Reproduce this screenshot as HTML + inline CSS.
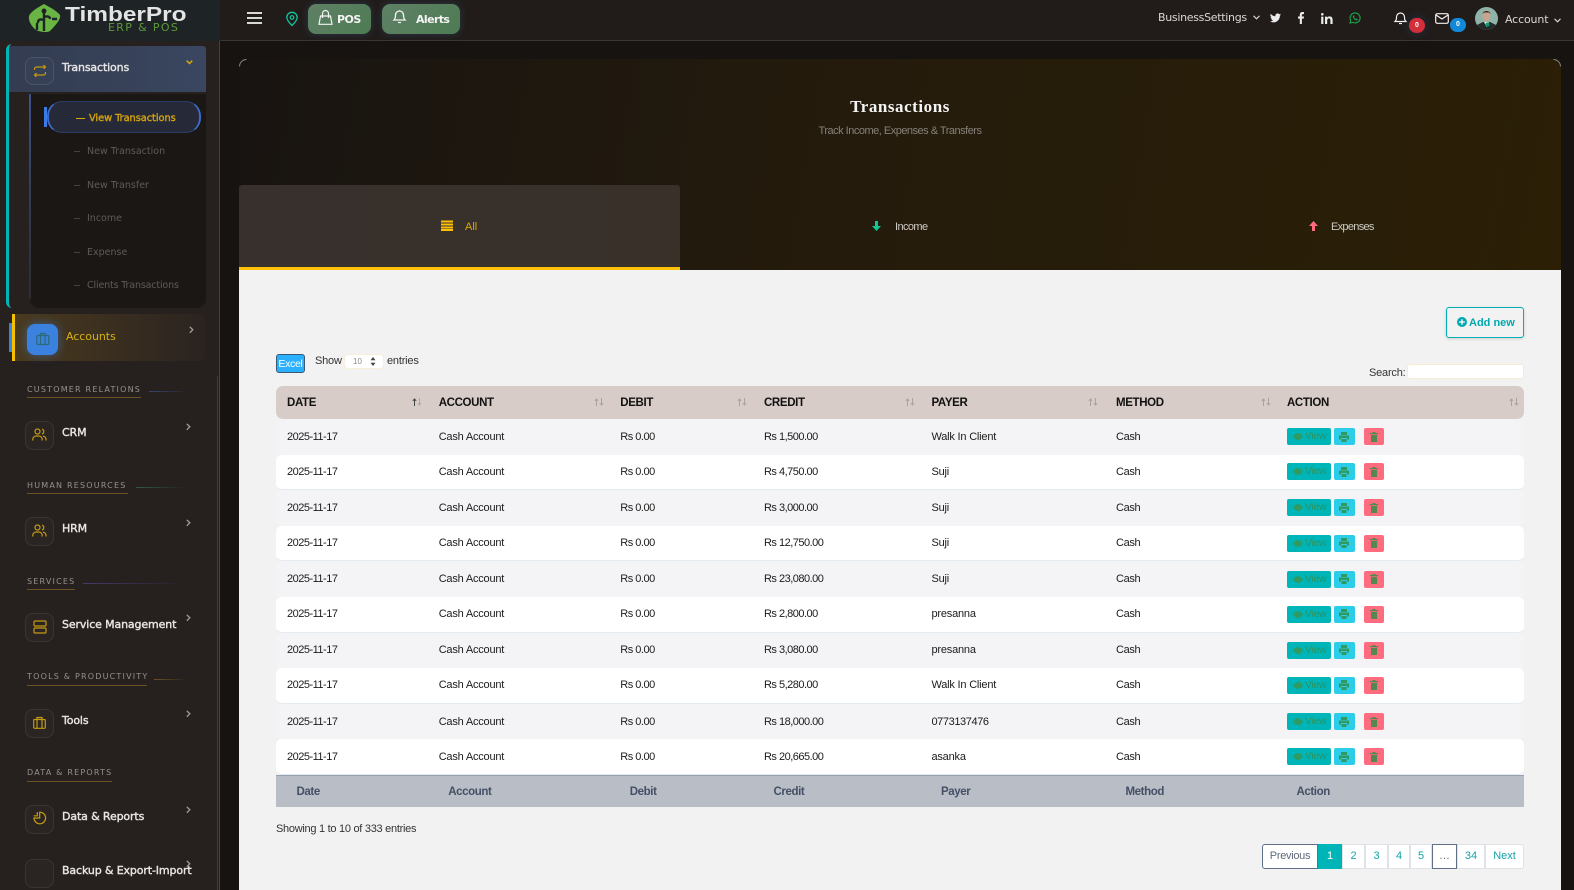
<!DOCTYPE html>
<html><head><meta charset="utf-8"><title>Transactions</title>
<style>
*{box-sizing:border-box}
html,body{margin:0;padding:0;width:1574px;height:890px;overflow:hidden;background:#171310;font-family:"Liberation Sans",sans-serif}
.a{position:absolute;white-space:nowrap}
svg{display:block;overflow:visible}
.m{font-family:"DejaVu Sans",sans-serif}
.it{font-family:"DejaVu Sans",sans-serif;font-size:11px;color:#e8e6e4;letter-spacing:-.13px;-webkit-text-stroke:.4px #e8e6e4;line-height:14px}
.sub{font-family:"DejaVu Sans",sans-serif;font-size:9.5px;color:#5f5b57;line-height:12px;letter-spacing:0}
.dash{background:#45413d;height:1px;width:6px}
.sec{font-family:"DejaVu Sans",sans-serif;font-size:8px;letter-spacing:1.2px;color:#95918d;line-height:10px}
.ul{height:1px;background:#6a5225;left:27px}
.ibox{left:25px;width:29px;height:29px;border:1px solid #3a3532;border-radius:8px;background:#2a2523}
.chev{left:186px}
table{position:absolute;left:276px;top:386px;width:1248px;border-collapse:separate;border-spacing:0;table-layout:fixed;font-size:11px;color:#1b1b1b}
th{height:33px;background:#d7ccc8;text-align:left;padding:0 0 0 11px;font-size:11.5px;letter-spacing:-.35px;color:#111;position:relative}
th:first-child{border-radius:7px 0 0 7px}th:last-child{border-radius:0 7px 7px 0}
th svg{position:absolute;top:12px}
td{height:35.6px;padding:0 0 0 11px;letter-spacing:-.2px}
tbody td:nth-child(1),tbody td:nth-child(3),tbody td:nth-child(4){letter-spacing:-.5px}
tbody td:nth-child(6){letter-spacing:-.35px}
tbody tr:nth-child(9) td:nth-child(5){letter-spacing:-.4px}
tbody tr:nth-child(odd) td{background:#f4f4f6}
tbody tr:nth-child(even) td{background:#fff;border-bottom:1px solid #e3ebf1}
tbody td:first-child{border-radius:6px 0 0 6px}tbody td:last-child{border-radius:0 6px 6px 0}
tfoot td{height:32px;background:#b8bdc6;border-top:1px solid #95a0b0;color:#455066;font-weight:bold;padding:2px 0 0 20.5px;font-size:11.5px;letter-spacing:-.4px}
.b{display:inline-block;height:17px;border-radius:2px;vertical-align:middle;position:relative}
tbody td .v{width:44px;background:#00b5b8;color:#2a9460;font-size:10.5px;line-height:16px;padding-left:18px;letter-spacing:-.3px}
.p{width:21px;background:#2ccde8;margin-left:3px}
.d{width:20px;background:#ff6b7f;margin-left:9px}
.v svg{position:absolute;left:6px;top:5px}
.p svg{position:absolute;left:5.5px;top:3.5px}.d svg{position:absolute;left:6px;top:3.5px}
.pg{position:absolute;top:844px;height:25px;background:#fff;border:1px solid #dfe2e6;font-size:11px;line-height:23px;text-align:center;color:#12a3a8}
</style></head><body>

<!-- top header -->
<div class="a" style="left:0;top:0;width:1574px;height:41px;background:#211c1a;border-bottom:1px solid #3a3633"></div>
<div class="a" style="left:0;top:0;width:220px;height:41px;background:#1e2326"></div>

<svg class="a" style="left:28px;top:4px" width="33" height="28" viewBox="0 0 33 28"><path d="M16 0C21 3 28 6 32 11C33 15 28 21 22 27C19 29 12 28 8 26C4 23 0 17 1 12C3 7 11 3 16 0Z" fill="#68b544"/><path d="M16 6V27M10 19C10 15 12 15 16 16M22 15C22 12 19 12 16 13M9 19V26M24 15H29" stroke="#1e2326" stroke-width="2.4" fill="none"/><circle cx="16" cy="7" r="2.5" fill="#1e2326"/></svg>
<div class="a" style="left:65px;top:4px;font-size:20px;font-weight:bold;color:#e4e4e4;line-height:23px;transform-origin:0 0;transform:scaleX(1.22)">TimberPro</div>
<div class="a m" style="left:108px;top:21px;font-size:11px;color:#5d9a3a;line-height:13px;letter-spacing:1.35px">ERP &amp; POS</div>

<svg class="a" style="left:247px;top:12px" width="16" height="12"><path d="M0 1H15M0 6H15M0 11H15" stroke="#f2f2f2" stroke-width="1.8"/></svg>
<svg class="a" style="left:286px;top:12px" width="12" height="14" viewBox="0 0 12 14"><path d="M6 13.5C3 10.5 .8 8 .8 5.5A5.2 5.2 0 0 1 11.2 5.5C11.2 8 9 10.5 6 13.5Z" fill="none" stroke="#10c7a0" stroke-width="1.3"/><circle cx="6" cy="5.5" r="1.8" fill="none" stroke="#10c7a0" stroke-width="1.2"/></svg>

<div class="a" style="left:308px;top:4px;width:63px;height:30px;border-radius:8px;background:linear-gradient(135deg,#5f8067,#4d7c52);box-shadow:0 0 8px rgba(70,110,160,.35)"></div>
<svg class="a" style="left:318px;top:10px" width="15" height="15" viewBox="0 0 15 15"><path d="M2.500 6H12.500L14 14.300H1ZM4.500 8V3.500A3 3 0 0 1 10.500 3.500V8" fill="none" stroke="#f4f4f4" stroke-width="1.2"/></svg>
<div class="a m" style="left:337px;top:13px;font-size:11px;font-weight:bold;color:#f4f4f4;line-height:14px;letter-spacing:-.5px">POS</div>
<div class="a" style="left:382px;top:4px;width:78px;height:30px;border-radius:8px;background:linear-gradient(135deg,#5f8067,#4d7c52);box-shadow:0 0 8px rgba(70,110,160,.35)"></div>
<svg class="a" style="left:393px;top:10px" width="13" height="14" viewBox="0 0 13 14"><path d="M1 10H12C10.500 8.500 10.500 7 10.500 5A4 4 0 0 0 2.500 5C2.500 7 2.500 8.500 1 10ZM5 12.500H8M6.500 .2V1" fill="none" stroke="#f4f4f4" stroke-width="1.3"/></svg>
<div class="a m" style="left:416px;top:13px;font-size:11px;font-weight:bold;color:#f4f4f4;line-height:14px;letter-spacing:-.6px">Alerts</div>

<div class="a m" style="left:1158px;top:11px;font-size:11px;color:#d9d7d5;line-height:14px;letter-spacing:-.3px">BusinessSettings</div>
<svg class="a" style="left:1253px;top:15px" width="7" height="5"><path d="M.5 .8L3.500 3.800L6.500 .8" fill="none" stroke="#d9d7d5" stroke-width="1.1"/></svg>
<svg class="a" style="left:1270px;top:13px" width="11" height="10" viewBox="0 0 24 20"><path d="M24 2.400c-.9.400-1.800.7-2.800.8 1-.6 1.800-1.600 2.200-2.700-1 .6-2 1-3.100 1.200A4.900 4.900 0 0 0 11.900 6.200 14 14 0 0 1 1.700.9a4.900 4.900 0 0 0 1.500 6.600c-.8 0-1.600-.2-2.200-.6 0 2.400 1.700 4.400 3.900 4.900-.7.200-1.500.2-2.200.1.600 2 2.400 3.400 4.600 3.400A9.900 9.900 0 0 1 0 17.300 14 14 0 0 0 21.500 4.900c1-.7 1.800-1.500 2.500-2.500z" fill="#ececec"/></svg>
<svg class="a" style="left:1298px;top:12px" width="6" height="12" viewBox="0 0 10 20"><path d="M6.500 20V11H9.500L10 7.500H6.500V5.200C6.500 4.200 6.800 3.500 8.200 3.500H10V.3C9.700.2 8.600 0 7.400 0 4.800 0 3 1.600 3 4.600V7.500H0V11H3V20Z" fill="#ececec"/></svg>
<svg class="a" style="left:1321px;top:13px" width="12" height="11" viewBox="0 0 12 11"><path d="M.2 3.600H2.400V11H.2ZM1.300 0A1.300 1.300 0 1 1 1.300 2.600 1.300 1.300 0 0 1 1.300 0ZM4 3.600H6.100V4.600C6.500 3.900 7.300 3.400 8.400 3.400 10.700 3.400 11.600 4.800 11.600 7V11H9.400V7.500C9.400 6.400 9.100 5.400 8 5.400 6.800 5.400 6.200 6.200 6.200 7.500V11H4Z" fill="#ececec"/></svg>
<svg class="a" style="left:1349px;top:12px" width="12" height="12" viewBox="0 0 12 12"><path d="M1 11L1.700 8.300A5 5 0 1 1 3.700 10.300Z" fill="none" stroke="#18a84a" stroke-width="1.100"/><path d="M4.200 3.500C3.500 4.500 4 6 5.200 7.200 6.400 8.300 7.800 8.700 8.500 8L8.500 7 7.300 6.400 6.800 7C6 6.600 5.400 6 5 5.200L5.500 4.600 4.900 3.400Z" fill="#18a84a"/></svg>

<svg class="a" style="left:1394px;top:12px" width="13" height="13" viewBox="0 0 13 13"><path d="M1 9.500H12C10.500 8 10.500 7 10.500 5A4 4 0 0 0 2.500 5C2.500 7 2.500 8 1 9.500ZM5 11.500H8" fill="none" stroke="#f0f0f0" stroke-width="1.200"/></svg>
<div class="a" style="left:1409px;top:18px;width:16px;height:15px;border-radius:8px;background:#d32f3a;box-shadow:0 0 10px rgba(60,90,160,.35);color:#fff;font-size:7px;font-weight:bold;text-align:center;line-height:15px">0</div>
<svg class="a" style="left:1435px;top:13px" width="14" height="11" viewBox="0 0 14 11"><rect x=".7" y=".7" width="12.600" height="9.600" rx="1.500" fill="none" stroke="#f0f0f0" stroke-width="1.200"/><path d="M1 2L7 6L13 2" fill="none" stroke="#f0f0f0" stroke-width="1.200"/></svg>
<div class="a" style="left:1450px;top:18px;width:16px;height:14px;border-radius:8px;background:#1289d8;color:#fff;font-size:7px;font-weight:bold;text-align:center;line-height:14px">0</div>
<svg class="a" style="left:1475px;top:7px" width="23" height="23" viewBox="0 0 23 23"><defs><clipPath id="c"><circle cx="11.500" cy="11.500" r="11.500"/></clipPath></defs><g clip-path="url(#c)"><rect width="23" height="23" fill="#8fb3a8"/><path d="M0 23V19L8 15H15L23 19V23Z" fill="#232b2b"/><path d="M9 15L11.500 20L14 15Z" fill="#e5e5e5"/><ellipse cx="11.500" cy="9" rx="4" ry="5.500" fill="#c9a58d"/><path d="M7.500 7C8 3 15 3 15.500 7L14 5.500H9Z" fill="#3b2c25"/><circle cx="12.500" cy="17.500" r="2" fill="#0c9a70"/></g></svg>
<div class="a m" style="left:1505px;top:13px;font-size:11px;color:#d9d7d5;line-height:14px;letter-spacing:-.15px">Account</div>
<svg class="a" style="left:1554px;top:18px" width="7" height="5"><path d="M.5 .8L3.500 3.800L6.500 .8" fill="none" stroke="#d9d7d5" stroke-width="1.100"/></svg>

<!-- sidebar -->
<div class="a" style="left:0;top:41px;width:220px;height:849px;background:#26201e;border-right:1px solid #4a4038"></div>
<div class="a" style="left:217px;top:376px;width:1px;height:514px;background:#3f3833"></div>

<div class="a" style="left:6px;top:44px;width:12px;height:264px;border-left:3px solid #00b5b8;border-radius:6px 0 0 6px"></div>
<div class="a" style="left:9px;top:46px;width:197px;height:46px;background:linear-gradient(90deg,#333c50,#3a4660);border-radius:3px 3px 0 0"></div>
<div class="a" style="left:25px;top:57px;width:29px;height:28px;border:1px solid #4b5468;border-radius:8px;background:#364056"></div>
<svg class="a" style="left:33px;top:64px" width="14" height="14" viewBox="0 0 14 14"><path d="M1.500 6V5A2 2 0 0 1 3.500 3H12.500M10.500 1L12.500 3L10.500 5M12.500 8V9A2 2 0 0 1 10.500 11H1.500M3.500 9L1.500 11L3.500 13" fill="none" stroke="#c49a12" stroke-width="1.200"/></svg>
<div class="a it" style="left:62px;top:61px">Transactions</div>
<svg class="a" style="left:186px;top:60px" width="7" height="5"><path d="M.7 .7L3.500 3.500L6.300 .7" fill="none" stroke="#d8a80c" stroke-width="1.500"/></svg>

<div class="a" style="left:30px;top:94px;width:176px;height:214px;background:#1b1715;border-radius:0 0 9px 9px"></div>
<div class="a" style="left:29px;top:94px;width:2px;height:205px;background:linear-gradient(180deg,#3d5390,#33405f 40%,#2d2c30)"></div>
<div class="a" style="left:47px;top:101px;width:154px;height:32px;background:#262938;border-style:solid;border-width:1px 2px 1px 2px;border-color:#2a3c66 #3c6ccf #2a3c66 #3c6ccf;border-radius:15px"></div>
<div class="a" style="left:44px;top:107px;width:3px;height:20px;background:#3b7be8"></div>
<div class="a" style="left:76px;top:117.500px;width:9px;height:1.500px;background:#d8a80c"></div>
<div class="a" style="left:89px;top:112px;font-family:'DejaVu Sans',sans-serif;font-size:9.800px;letter-spacing:-.05px;color:#d0a10d;-webkit-text-stroke:.4px #d0a10d;line-height:13px">View Transactions</div>

<div class="a dash" style="left:74px;top:151px"></div><div class="a sub" style="left:87px;top:146px">New Transaction</div>
<div class="a dash" style="left:74px;top:185px"></div><div class="a sub" style="left:87px;top:180px">New Transfer</div>
<div class="a dash" style="left:74px;top:218px"></div><div class="a sub" style="left:87px;top:213px">Income</div>
<div class="a dash" style="left:74px;top:252px"></div><div class="a sub" style="left:87px;top:247px">Expense</div>
<div class="a dash" style="left:74px;top:285px"></div><div class="a sub" style="left:87px;top:280px;letter-spacing:-.15px">Clients Transactions</div>

<div class="a" style="left:9px;top:323px;width:3px;height:29px;background:#3b82e0"></div>
<div class="a" style="left:12px;top:314px;width:193px;height:47px;background:linear-gradient(90deg,#4a3a1e,#2a2320);border-left:3px solid #f5c000;border-radius:0 5px 5px 0"></div>
<div class="a" style="left:27px;top:324px;width:31px;height:31px;border-radius:8px;background:#3b82e0;box-shadow:0 0 10px rgba(59,130,224,.55)"></div>
<svg class="a" style="left:36px;top:332px" width="14" height="14" viewBox="0 0 14 14"><rect x=".8" y="3.500" width="12" height="9" rx="1" fill="none" stroke="#2b6a78" stroke-width="1.200"/><path d="M4.500 3.500V1.500H9V3.500M4.500 3.500V12.500M9 3.500V12.500" fill="none" stroke="#2b6a78" stroke-width="1.200"/></svg>
<div class="a m" style="left:66px;top:330px;font-size:11px;color:#d8b212;letter-spacing:-.05px;line-height:14px">Accounts</div>
<svg class="a" style="left:189px;top:326px" width="5" height="8"><path d="M.8 .8L3.800 3.800L.8 6.800" fill="none" stroke="#a29e9a" stroke-width="1.300"/></svg>

<div class="a sec" style="left:27px;top:385px">CUSTOMER RELATIONS</div><div class="a ul" style="top:397px;width:114px"></div>
<div class="a" style="left:149px;top:391px;width:40px;height:1px;background:linear-gradient(90deg,#33466e,transparent)"></div>
<div class="a ibox" style="top:421px"></div>
<svg class="a" style="left:32px;top:428px" width="15" height="14" viewBox="0 0 15 14"><circle cx="5.500" cy="3.500" r="2.500" fill="none" stroke="#c49a12" stroke-width="1.200"/><path d="M.8 12.500V11A3.500 3.500 0 0 1 4.300 8H6.700A3.500 3.500 0 0 1 10.200 11V12.500M10 1.200A2.500 2.500 0 0 1 10 6M11 8.200A3.300 3.300 0 0 1 14 11V12.500" fill="none" stroke="#c49a12" stroke-width="1.200"/></svg>
<div class="a it" style="left:62px;top:426px">CRM</div>
<svg class="a chev" style="top:423px" width="5" height="8"><path d="M.8 .8L3.800 3.800L.8 6.800" fill="none" stroke="#a29e9a" stroke-width="1.300"/></svg>

<div class="a sec" style="left:27px;top:481px">HUMAN RESOURCES</div><div class="a ul" style="top:493px;width:101px"></div>
<div class="a" style="left:136px;top:487px;width:50px;height:1px;background:linear-gradient(90deg,#2c5a4a,transparent)"></div>
<div class="a ibox" style="top:517px"></div>
<svg class="a" style="left:32px;top:524px" width="15" height="14" viewBox="0 0 15 14"><circle cx="5.500" cy="3.500" r="2.500" fill="none" stroke="#c49a12" stroke-width="1.200"/><path d="M.8 12.500V11A3.500 3.500 0 0 1 4.300 8H6.700A3.500 3.500 0 0 1 10.200 11V12.500M10 1.200A2.500 2.500 0 0 1 10 6M11 8.200A3.300 3.300 0 0 1 14 11V12.500" fill="none" stroke="#c49a12" stroke-width="1.200"/></svg>
<div class="a it" style="left:62px;top:522px">HRM</div>
<svg class="a chev" style="top:519px" width="5" height="8"><path d="M.8 .8L3.800 3.800L.8 6.800" fill="none" stroke="#a29e9a" stroke-width="1.300"/></svg>

<div class="a sec" style="left:27px;top:577px">SERVICES</div><div class="a ul" style="top:589px;width:48px"></div>
<div class="a" style="left:83px;top:583px;width:103px;height:1px;background:linear-gradient(90deg,#463a6e,transparent)"></div>
<div class="a ibox" style="top:613px"></div>
<svg class="a" style="left:33px;top:620px" width="14" height="14" viewBox="0 0 14 14"><rect x="1" y="1" width="12" height="5" rx="1" fill="none" stroke="#c49a12" stroke-width="1.200"/><rect x="1" y="8" width="12" height="5" rx="1" fill="none" stroke="#c49a12" stroke-width="1.200"/></svg>
<div class="a it" style="left:62px;top:618px">Service Management</div>
<svg class="a chev" style="top:614px" width="5" height="8"><path d="M.8 .8L3.800 3.800L.8 6.800" fill="none" stroke="#a29e9a" stroke-width="1.300"/></svg>

<div class="a sec" style="left:27px;top:672px">TOOLS &amp; PRODUCTIVITY</div><div class="a ul" style="top:685px;width:120px"></div>
<div class="a" style="left:154px;top:679px;width:34px;height:1px;background:linear-gradient(90deg,#6a5225,transparent)"></div>
<div class="a ibox" style="top:709px"></div>
<svg class="a" style="left:33px;top:716px" width="13" height="14" viewBox="0 0 13 14"><rect x=".7" y="3.500" width="11.600" height="8.800" rx="1" fill="none" stroke="#c49a12" stroke-width="1.200"/><path d="M4 3.500V1.500H9V3.500M4 3.500V12.300M9 3.500V12.300" fill="none" stroke="#c49a12" stroke-width="1.200"/></svg>
<div class="a it" style="left:62px;top:714px">Tools</div>
<svg class="a chev" style="top:710px" width="5" height="8"><path d="M.8 .8L3.800 3.800L.8 6.800" fill="none" stroke="#a29e9a" stroke-width="1.300"/></svg>

<div class="a sec" style="left:27px;top:768px">DATA &amp; REPORTS</div><div class="a ul" style="top:781px;width:85px"></div>
<div class="a ibox" style="top:805px"></div>
<svg class="a" style="left:33px;top:811px" width="14" height="14" viewBox="0 0 14 14"><path d="M6.700 1.200A5.800 5.800 0 1 1 1 7H6.700ZM4.300 1V4.800H.8" fill="none" stroke="#c49a12" stroke-width="1.200"/></svg>
<div class="a it" style="left:62px;top:810px">Data &amp; Reports</div>
<svg class="a chev" style="top:806px" width="5" height="8"><path d="M.8 .8L3.800 3.800L.8 6.800" fill="none" stroke="#a29e9a" stroke-width="1.300"/></svg>
<div class="a ibox" style="top:859px"></div>
<div class="a it" style="left:62px;top:864px">Backup &amp; Export-Import</div>
<svg class="a chev" style="top:860px" width="5" height="8"><path d="M.8 .8L3.800 3.800L.8 6.800" fill="none" stroke="#a29e9a" stroke-width="1.300"/></svg>

<!-- page hero -->
<div class="a" style="left:239px;top:59px;width:1322px;height:212px;border-radius:10px 10px 0 0;background:linear-gradient(100deg,#181411 0%,#241b0c 45%,#2b1f06 100%)"></div>
<svg class="a" style="left:239px;top:59px" width="8" height="8"><path d="M.5 7.500A7 7 0 0 1 7.500 .5" fill="none" stroke="#8a8680" stroke-width="1"/></svg>
<svg class="a" style="left:1553px;top:59px" width="8" height="8"><path d="M.5 .5A7 7 0 0 1 7.500 7.500" fill="none" stroke="#8a8680" stroke-width="1"/></svg>
<div class="a" style="left:739px;top:97px;width:322px;text-align:center;font-family:'Liberation Serif',serif;font-weight:bold;font-size:17px;letter-spacing:.55px;color:#f4f4f4;line-height:20px">Transactions</div>
<div class="a" style="left:739px;top:124px;width:322px;text-align:center;font-size:11px;letter-spacing:-.5px;color:#85817a;line-height:14px">Track Income, Expenses &amp; Transfers</div>

<div class="a" style="left:239px;top:185px;width:441px;height:85px;background:linear-gradient(90deg,#37302c,#39302a);border-radius:3px 3px 0 0;border-bottom:3px solid #ffc107"></div>
<svg class="a" style="left:441px;top:221px" width="12" height="10" viewBox="0 0 12 10"><path d="M0 .5H12M0 3.500H12M0 6.500H12M0 9H12" stroke="#ffc107" stroke-width="2"/></svg>
<div class="a" style="left:465px;top:221px;font-size:11px;color:#dba70b;line-height:13px">All</div>
<svg class="a" style="left:872px;top:221px" width="9" height="10" viewBox="0 0 9 10"><path d="M3 0H6V5H9L4.500 10L0 5H3Z" fill="#12c793"/></svg>
<div class="a" style="left:895px;top:221px;font-size:11px;color:#cfccc6;letter-spacing:-.6px;line-height:13px">Income</div>
<svg class="a" style="left:1309px;top:221px" width="9" height="10" viewBox="0 0 9 10"><path d="M3 10H6V5H9L4.500 0L0 5H3Z" fill="#ff6b7f"/></svg>
<div class="a" style="left:1331px;top:221px;font-size:11px;color:#cfccc6;letter-spacing:-.7px;line-height:13px">Expenses</div>

<!-- content -->
<div class="a" style="left:239px;top:270px;width:1322px;height:620px;background:#f2f2f2"></div>

<div class="a" style="left:1446px;top:307px;width:78px;height:31px;border:1.500px solid #00b0b6;border-radius:3px;box-shadow:0 1px 3px rgba(0,0,0,.15)"></div>
<svg class="a" style="left:1457px;top:317px" width="10" height="10" viewBox="0 0 10 10"><circle cx="5" cy="5" r="5" fill="#00a8b0"/><path d="M5 2.200V7.800M2.200 5H7.800" stroke="#f2f2f2" stroke-width="1.500"/></svg>
<div class="a" style="left:1469px;top:317px;font-size:11px;font-weight:bold;color:#00a8b0;line-height:13px">Add new</div>

<div class="a" style="left:276px;top:354px;width:29px;height:19px;background:#2bb0ff;border:1px solid #3a5a78;border-radius:3px;color:#fff;font-size:10.500px;letter-spacing:-.3px;text-align:center;line-height:18px">Excel</div>
<div class="a" style="left:315px;top:355px;font-size:11px;color:#333;line-height:13px;letter-spacing:-.2px">Show</div>
<div class="a" style="left:344px;top:354px;width:40px;height:15px;background:#fff;border:1px solid #f7efd8;border-radius:4px;color:#8a8a8a;font-size:8px;line-height:13px;padding-left:8px">10</div>
<svg class="a" style="left:370px;top:357px" width="6" height="9"><path d="M3 0L5.500 3.300H.5ZM3 9L5.500 5.700H.5Z" fill="#444"/></svg>
<div class="a" style="left:387px;top:355px;font-size:11px;color:#333;line-height:13px;letter-spacing:-.2px">entries</div>
<div class="a" style="left:1369px;top:367px;font-size:11px;color:#333;line-height:13px;letter-spacing:-.2px">Search:</div>
<div class="a" style="left:1407px;top:364px;width:117px;height:15px;background:#fff;border:1px solid #f5ecd6;border-radius:3px"></div>

<table>
<colgroup><col style="width:151.700px"><col style="width:181.600px"><col style="width:143.700px"><col style="width:167.500px"><col style="width:184.500px"><col style="width:171px"><col></colgroup>
<thead><tr>
<th>DATE<svg style="left:136px" width="10" height="9"><path d="M2.500 8V1M.8 2.800L2.500 1L4.200 2.800" fill="none" stroke="#444" stroke-width="1"/><path d="M7.500 0V7M5.800 5.200L7.500 7L9.200 5.200" fill="none" stroke="#aaa" stroke-width="1"/></svg></th>
<th>ACCOUNT<svg style="left:166px" width="10" height="9"><path d="M2.500 8V1M.8 2.800L2.500 1L4.200 2.800M7.500 0V7M5.800 5.200L7.500 7L9.200 5.200" fill="none" stroke="#a9a3a0" stroke-width="1"/></svg></th>
<th>DEBIT<svg style="left:128px" width="10" height="9"><path d="M2.500 8V1M.8 2.800L2.500 1L4.200 2.800M7.500 0V7M5.800 5.200L7.500 7L9.200 5.200" fill="none" stroke="#a9a3a0" stroke-width="1"/></svg></th>
<th>CREDIT<svg style="left:152px" width="10" height="9"><path d="M2.500 8V1M.8 2.800L2.500 1L4.200 2.800M7.500 0V7M5.800 5.200L7.500 7L9.200 5.200" fill="none" stroke="#a9a3a0" stroke-width="1"/></svg></th>
<th>PAYER<svg style="left:168px" width="10" height="9"><path d="M2.500 8V1M.8 2.800L2.500 1L4.200 2.800M7.500 0V7M5.800 5.200L7.500 7L9.200 5.200" fill="none" stroke="#a9a3a0" stroke-width="1"/></svg></th>
<th>METHOD<svg style="left:156px" width="10" height="9"><path d="M2.500 8V1M.8 2.800L2.500 1L4.200 2.800M7.500 0V7M5.800 5.200L7.500 7L9.200 5.200" fill="none" stroke="#a9a3a0" stroke-width="1"/></svg></th>
<th>ACTION<svg style="left:233px" width="10" height="9"><path d="M2.500 8V1M.8 2.800L2.500 1L4.200 2.800M7.500 0V7M5.800 5.200L7.500 7L9.200 5.200" fill="none" stroke="#a9a3a0" stroke-width="1"/></svg></th>
</tr></thead>
<tbody>
<tr><td>2025-11-17</td><td>Cash Account</td><td>Rs 0.00</td><td>Rs 1,500.00</td><td>Walk In Client</td><td>Cash</td><td><span class="b v"><svg width="10" height="7" viewBox="0 0 10 7"><path d="M0 3.500C2.500 -1 7.500 -1 10 3.500 7.500 8 2.500 8 0 3.500Z" fill="#2f9b63"/></svg>View</span><span class="b p"><svg width="10" height="10" viewBox="0 0 10 10"><path d="M2 0H8V3H2ZM0 3.500H10V7.500H8V6H2V7.500H0ZM2.500 7H7.500V10H2.500Z" fill="#2f9b63"/></svg></span><span class="b d"><svg width="8" height="10" viewBox="0 0 8 10"><path d="M0 1H2.500V0H5.500V1H8V2.200H0ZM1 3H7V10H1Z" fill="#55884f"/></svg></span></td></tr>
<tr><td>2025-11-17</td><td>Cash Account</td><td>Rs 0.00</td><td>Rs 4,750.00</td><td>Suji</td><td>Cash</td><td><span class="b v"><svg width="10" height="7" viewBox="0 0 10 7"><path d="M0 3.500C2.500 -1 7.500 -1 10 3.500 7.500 8 2.500 8 0 3.500Z" fill="#2f9b63"/></svg>View</span><span class="b p"><svg width="10" height="10" viewBox="0 0 10 10"><path d="M2 0H8V3H2ZM0 3.500H10V7.500H8V6H2V7.500H0ZM2.500 7H7.500V10H2.500Z" fill="#2f9b63"/></svg></span><span class="b d"><svg width="8" height="10" viewBox="0 0 8 10"><path d="M0 1H2.500V0H5.500V1H8V2.200H0ZM1 3H7V10H1Z" fill="#55884f"/></svg></span></td></tr>
<tr><td>2025-11-17</td><td>Cash Account</td><td>Rs 0.00</td><td>Rs 3,000.00</td><td>Suji</td><td>Cash</td><td><span class="b v"><svg width="10" height="7" viewBox="0 0 10 7"><path d="M0 3.500C2.500 -1 7.500 -1 10 3.500 7.500 8 2.500 8 0 3.500Z" fill="#2f9b63"/></svg>View</span><span class="b p"><svg width="10" height="10" viewBox="0 0 10 10"><path d="M2 0H8V3H2ZM0 3.500H10V7.500H8V6H2V7.500H0ZM2.500 7H7.500V10H2.500Z" fill="#2f9b63"/></svg></span><span class="b d"><svg width="8" height="10" viewBox="0 0 8 10"><path d="M0 1H2.500V0H5.500V1H8V2.200H0ZM1 3H7V10H1Z" fill="#55884f"/></svg></span></td></tr>
<tr><td>2025-11-17</td><td>Cash Account</td><td>Rs 0.00</td><td>Rs 12,750.00</td><td>Suji</td><td>Cash</td><td><span class="b v"><svg width="10" height="7" viewBox="0 0 10 7"><path d="M0 3.500C2.500 -1 7.500 -1 10 3.500 7.500 8 2.500 8 0 3.500Z" fill="#2f9b63"/></svg>View</span><span class="b p"><svg width="10" height="10" viewBox="0 0 10 10"><path d="M2 0H8V3H2ZM0 3.500H10V7.500H8V6H2V7.500H0ZM2.500 7H7.500V10H2.500Z" fill="#2f9b63"/></svg></span><span class="b d"><svg width="8" height="10" viewBox="0 0 8 10"><path d="M0 1H2.500V0H5.500V1H8V2.200H0ZM1 3H7V10H1Z" fill="#55884f"/></svg></span></td></tr>
<tr><td>2025-11-17</td><td>Cash Account</td><td>Rs 0.00</td><td>Rs 23,080.00</td><td>Suji</td><td>Cash</td><td><span class="b v"><svg width="10" height="7" viewBox="0 0 10 7"><path d="M0 3.500C2.500 -1 7.500 -1 10 3.500 7.500 8 2.500 8 0 3.500Z" fill="#2f9b63"/></svg>View</span><span class="b p"><svg width="10" height="10" viewBox="0 0 10 10"><path d="M2 0H8V3H2ZM0 3.500H10V7.500H8V6H2V7.500H0ZM2.500 7H7.500V10H2.500Z" fill="#2f9b63"/></svg></span><span class="b d"><svg width="8" height="10" viewBox="0 0 8 10"><path d="M0 1H2.500V0H5.500V1H8V2.200H0ZM1 3H7V10H1Z" fill="#55884f"/></svg></span></td></tr>
<tr><td>2025-11-17</td><td>Cash Account</td><td>Rs 0.00</td><td>Rs 2,800.00</td><td>presanna</td><td>Cash</td><td><span class="b v"><svg width="10" height="7" viewBox="0 0 10 7"><path d="M0 3.500C2.500 -1 7.500 -1 10 3.500 7.500 8 2.500 8 0 3.500Z" fill="#2f9b63"/></svg>View</span><span class="b p"><svg width="10" height="10" viewBox="0 0 10 10"><path d="M2 0H8V3H2ZM0 3.500H10V7.500H8V6H2V7.500H0ZM2.500 7H7.500V10H2.500Z" fill="#2f9b63"/></svg></span><span class="b d"><svg width="8" height="10" viewBox="0 0 8 10"><path d="M0 1H2.500V0H5.500V1H8V2.200H0ZM1 3H7V10H1Z" fill="#55884f"/></svg></span></td></tr>
<tr><td>2025-11-17</td><td>Cash Account</td><td>Rs 0.00</td><td>Rs 3,080.00</td><td>presanna</td><td>Cash</td><td><span class="b v"><svg width="10" height="7" viewBox="0 0 10 7"><path d="M0 3.500C2.500 -1 7.500 -1 10 3.500 7.500 8 2.500 8 0 3.500Z" fill="#2f9b63"/></svg>View</span><span class="b p"><svg width="10" height="10" viewBox="0 0 10 10"><path d="M2 0H8V3H2ZM0 3.500H10V7.500H8V6H2V7.500H0ZM2.500 7H7.500V10H2.500Z" fill="#2f9b63"/></svg></span><span class="b d"><svg width="8" height="10" viewBox="0 0 8 10"><path d="M0 1H2.500V0H5.500V1H8V2.200H0ZM1 3H7V10H1Z" fill="#55884f"/></svg></span></td></tr>
<tr><td>2025-11-17</td><td>Cash Account</td><td>Rs 0.00</td><td>Rs 5,280.00</td><td>Walk In Client</td><td>Cash</td><td><span class="b v"><svg width="10" height="7" viewBox="0 0 10 7"><path d="M0 3.500C2.500 -1 7.500 -1 10 3.500 7.500 8 2.500 8 0 3.500Z" fill="#2f9b63"/></svg>View</span><span class="b p"><svg width="10" height="10" viewBox="0 0 10 10"><path d="M2 0H8V3H2ZM0 3.500H10V7.500H8V6H2V7.500H0ZM2.500 7H7.500V10H2.500Z" fill="#2f9b63"/></svg></span><span class="b d"><svg width="8" height="10" viewBox="0 0 8 10"><path d="M0 1H2.500V0H5.500V1H8V2.200H0ZM1 3H7V10H1Z" fill="#55884f"/></svg></span></td></tr>
<tr><td>2025-11-17</td><td>Cash Account</td><td>Rs 0.00</td><td>Rs 18,000.00</td><td>0773137476</td><td>Cash</td><td><span class="b v"><svg width="10" height="7" viewBox="0 0 10 7"><path d="M0 3.500C2.500 -1 7.500 -1 10 3.500 7.500 8 2.500 8 0 3.500Z" fill="#2f9b63"/></svg>View</span><span class="b p"><svg width="10" height="10" viewBox="0 0 10 10"><path d="M2 0H8V3H2ZM0 3.500H10V7.500H8V6H2V7.500H0ZM2.500 7H7.500V10H2.500Z" fill="#2f9b63"/></svg></span><span class="b d"><svg width="8" height="10" viewBox="0 0 8 10"><path d="M0 1H2.500V0H5.500V1H8V2.200H0ZM1 3H7V10H1Z" fill="#55884f"/></svg></span></td></tr>
<tr><td>2025-11-17</td><td>Cash Account</td><td>Rs 0.00</td><td>Rs 20,665.00</td><td>asanka</td><td>Cash</td><td><span class="b v"><svg width="10" height="7" viewBox="0 0 10 7"><path d="M0 3.500C2.500 -1 7.500 -1 10 3.500 7.500 8 2.500 8 0 3.500Z" fill="#2f9b63"/></svg>View</span><span class="b p"><svg width="10" height="10" viewBox="0 0 10 10"><path d="M2 0H8V3H2ZM0 3.500H10V7.500H8V6H2V7.500H0ZM2.500 7H7.500V10H2.500Z" fill="#2f9b63"/></svg></span><span class="b d"><svg width="8" height="10" viewBox="0 0 8 10"><path d="M0 1H2.500V0H5.500V1H8V2.200H0ZM1 3H7V10H1Z" fill="#55884f"/></svg></span></td></tr>
</tbody>
<tfoot><tr><td>Date</td><td>Account</td><td>Debit</td><td>Credit</td><td>Payer</td><td>Method</td><td>Action</td></tr></tfoot>
</table>

<div class="a" style="left:276px;top:823px;font-size:11px;color:#333;line-height:13px;letter-spacing:-.28px">Showing 1 to 10 of 333 entries</div>

<div class="pg" style="left:1262px;width:56px;border:1px solid #5f6f85;border-radius:3px 0 0 3px;color:#5f6b7a;letter-spacing:-.3px">Previous</div>
<div class="pg" style="left:1318px;width:24px;background:#00b5b8;border-color:#00b5b8;color:#fff">1</div>
<div class="pg" style="left:1342px;width:23px">2</div>
<div class="pg" style="left:1365px;width:23px">3</div>
<div class="pg" style="left:1388px;width:22px">4</div>
<div class="pg" style="left:1410px;width:22px">5</div>
<div class="pg" style="left:1432px;width:25px;border:1px solid #5f6f85;color:#5f6b7a">…</div>
<div class="pg" style="left:1457px;width:28px">34</div>
<div class="pg" style="left:1485px;width:39px;border-radius:0 3px 3px 0">Next</div>

</body></html>
